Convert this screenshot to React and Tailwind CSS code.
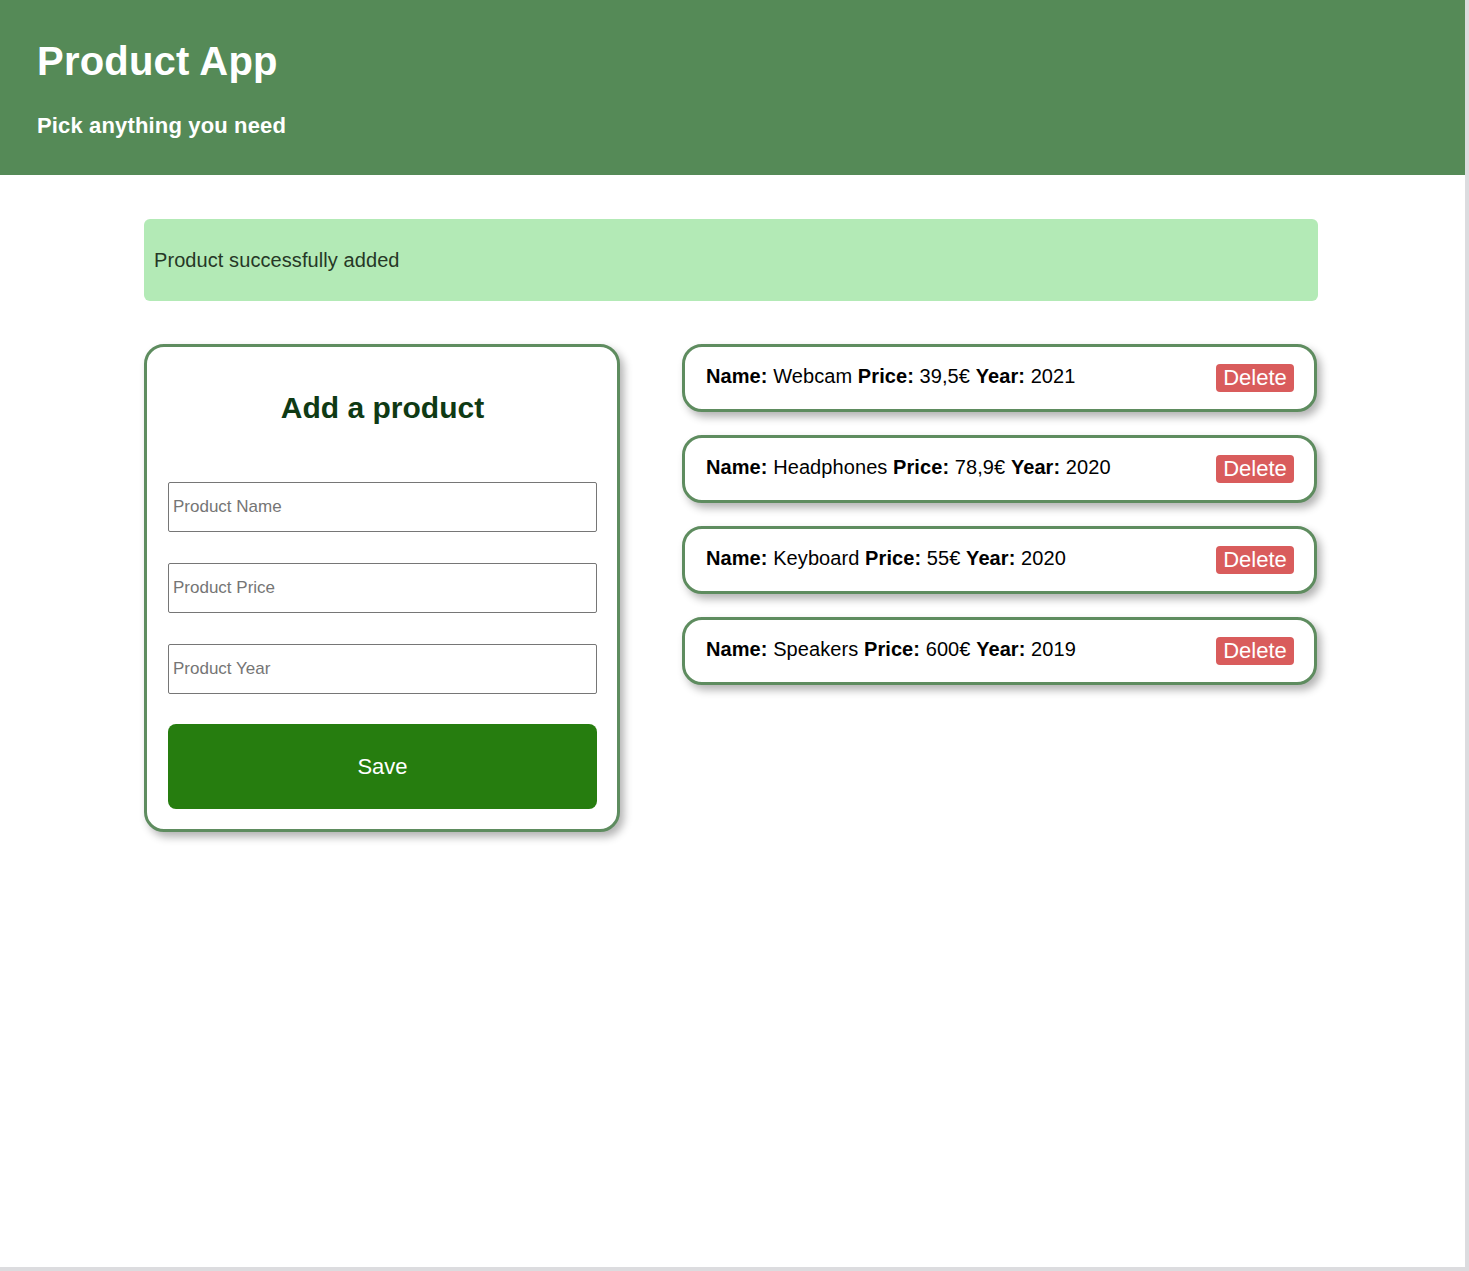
import React from "react";

const products = [
  { name: "Webcam", price: "39,5€", year: "2021" },
  { name: "Headphones", price: "78,9€", year: "2020" },
  { name: "Keyboard", price: "55€", year: "2020" },
  { name: "Speakers", price: "600€", year: "2019" },
];

export default function App() {
  return (
    <div
      className="w-[1469px] h-[1271px] bg-white border-r-[4px] border-b-[4px] border-[#dcdcdf] overflow-hidden"
      style={{ fontFamily: '"Liberation Sans", Arial, sans-serif' }}
    >
      <header className="bg-[#558a57] h-[175px] pt-[38px] pl-[37px] text-white">
        <h1 className="text-[40px] leading-[46px] font-bold tracking-[0.2px]">Product App</h1>
        <p className="mt-[29px] text-[22px] leading-[25px] font-bold tracking-[0.15px]">Pick anything you need</p>
      </header>

      <main className="pl-[144px] pt-[44px]">
        <div className="w-[1174px] h-[82px] rounded-[6px] bg-[#b3eab6] flex items-center pl-[10px] text-[20px] text-[#263826] tracking-[0.08px]">
          Product successfully added
        </div>

        <div className="mt-[43px] flex items-start gap-[62px]">
          <form
            className="w-[476px] border-[3px] border-[#5e8c5f] rounded-[20px] bg-white pl-[21px] pr-[20px] pt-[43px] pb-[20px] shadow-[4px_5px_8px_rgba(0,0,0,0.3)] flex flex-col"
            onSubmit={(e) => e.preventDefault()}
          >
            <h2 className="text-center text-[30px] leading-[35px] font-bold text-[#0f3a14]">Add a product</h2>
            <input
              placeholder="Product Name"
              className="mt-[57px] h-[50px] border border-[#767676] rounded-[2px] px-[4px] text-[17px] placeholder:text-[#757575] outline-none"
            />
            <input
              placeholder="Product Price"
              className="mt-[31px] h-[50px] border border-[#767676] rounded-[2px] px-[4px] text-[17px] placeholder:text-[#757575] outline-none"
            />
            <input
              placeholder="Product Year"
              className="mt-[31px] h-[50px] border border-[#767676] rounded-[2px] px-[4px] text-[17px] placeholder:text-[#757575] outline-none"
            />
            <button
              type="submit"
              className="mt-[30px] h-[85px] rounded-[8px] bg-[#267d0f] text-white text-[22px]"
            >
              Save
            </button>
          </form>

          <div className="w-[635px] flex flex-col gap-[23px]">
            {products.map((p) => (
              <div
                key={p.name}
                className="h-[68px] border-[3px] border-[#5e8c5f] rounded-[20px] bg-white pl-[21px] pr-[20px] flex items-center justify-between shadow-[4px_5px_8px_rgba(0,0,0,0.3)] text-[20px] text-black"
              >
                <p className="-mt-[5px] tracking-[0.08px]">
                  <b>Name:</b> {p.name} <b>Price:</b> {p.price} <b>Year:</b> {p.year}
                </p>
                <button className="h-[28px] w-[78px] rounded-[4px] bg-[#d95c5c] text-white text-[22px] leading-[28px]">
                  Delete
                </button>
              </div>
            ))}
          </div>
        </div>
      </main>
    </div>
  );
}
